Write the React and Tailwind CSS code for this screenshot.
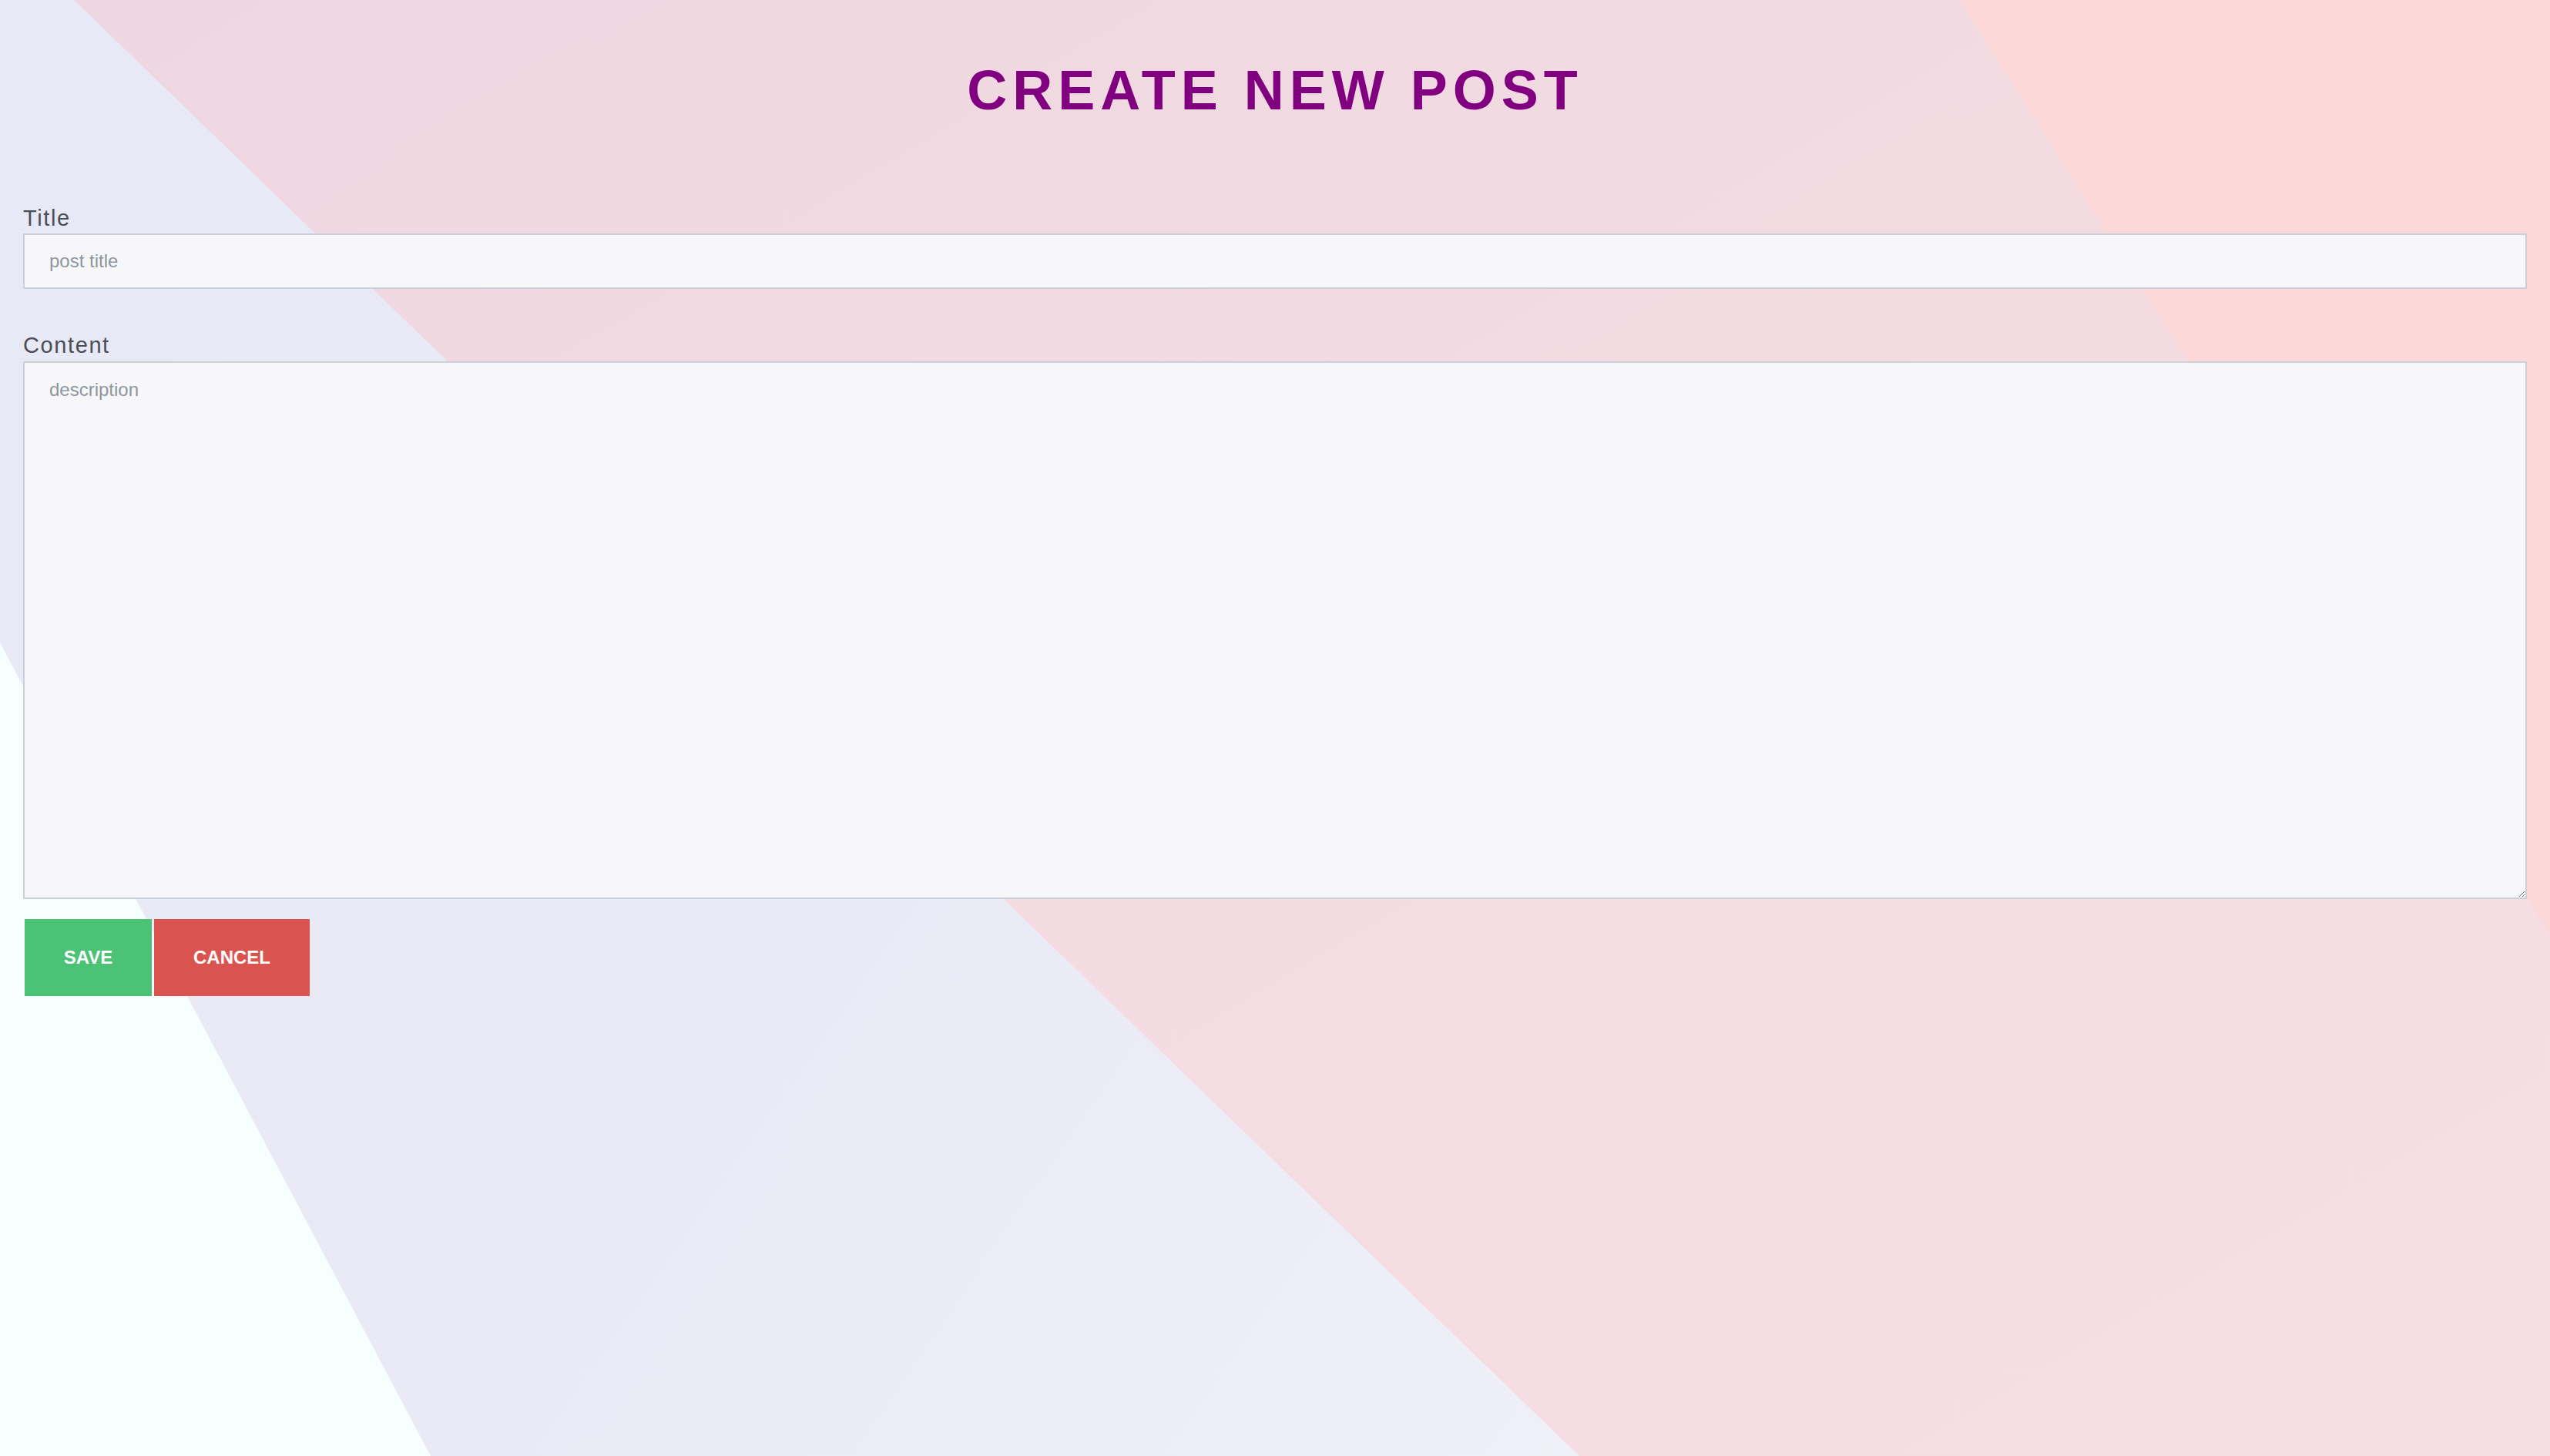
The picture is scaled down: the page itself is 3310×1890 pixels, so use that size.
import { useState } from "react";

const Backdrop = () => (
  <svg
    className="absolute inset-0 h-full w-full"
    viewBox="0 0 3310 1890"
    preserveAspectRatio="none"
    aria-hidden="true"
  >
    <defs>
      <linearGradient id="lavender" x1="0" y1="0" x2="1" y2="0.4">
        <stop offset="0" stopColor="#e8e9f6" />
        <stop offset="0.5" stopColor="#eaeaf6" />
        <stop offset="1" stopColor="#f1f1f9" />
      </linearGradient>
      <linearGradient id="pink" x1="0" y1="0" x2="1" y2="1">
        <stop offset="0" stopColor="#eed7e1" />
        <stop offset="0.6" stopColor="#f5dce2" />
        <stop offset="1" stopColor="#f7dee3" />
      </linearGradient>
    </defs>
    <rect x="0" y="0" width="3310" height="1890" fill="url(#lavender)" />
    <polygon points="0,834 559,1890 0,1890" fill="#f7fefe" />
    <polygon points="96,0 3310,0 3310,1890 2050,1890" fill="url(#pink)" />
    <polygon points="2544,0 3310,0 3310,1214" fill="#fcd9d8" />
  </svg>
);

function App() {
  const [title, setTitle] = useState("");
  const [content, setContent] = useState("");

  return (
    <div className="relative min-h-screen w-full overflow-hidden font-['Liberation_Sans',Arial,sans-serif]">
      <Backdrop />

      <div className="relative px-[30px] pt-[81px]">
        <h1 className="text-center text-[72px] leading-none font-bold tracking-[7px] text-[#800080]">
          CREATE NEW POST
        </h1>

        <form
          className="mt-[116px] flex flex-col"
          onSubmit={(event) => event.preventDefault()}
        >
          <label className="mb-[5px] block text-[29px] leading-[29px] tracking-[1.6px] text-[#4a4f57]">
            Title
          </label>
          <input
            value={title}
            onChange={(event) => setTitle(event.target.value)}
            placeholder="post title"
            className="h-[72px] w-full border-2 border-[#ccd1d9] bg-[#f7f7f9] px-[32px] text-[24px] text-[#4a4f57] outline-none placeholder:text-[#8e969e]"
          />

          <label className="mt-[59px] mb-[6px] block text-[29px] leading-[29px] tracking-[1.6px] text-[#4a4f57]">
            Content
          </label>
          <textarea
            value={content}
            onChange={(event) => setContent(event.target.value)}
            placeholder="description"
            className="block h-[698px] w-full resize border-2 border-[#ccd1d9] bg-[#f7f7f9] px-[32px] pt-[17px] text-[24px] text-[#4a4f57] outline-none placeholder:text-[#8e969e]"
          />

          <div className="mt-[26px] ml-[2px] flex gap-[3px]">
            <button
              type="submit"
              className="flex h-[100px] w-[165px] items-center justify-center bg-[#4bc276] text-[24px] font-bold text-white"
            >
              SAVE
            </button>
            <button
              type="button"
              className="flex h-[100px] w-[202px] items-center justify-center bg-[#d9534f] text-[24px] font-bold text-white"
            >
              CANCEL
            </button>
          </div>
        </form>
      </div>
    </div>
  );
}

export default App;
